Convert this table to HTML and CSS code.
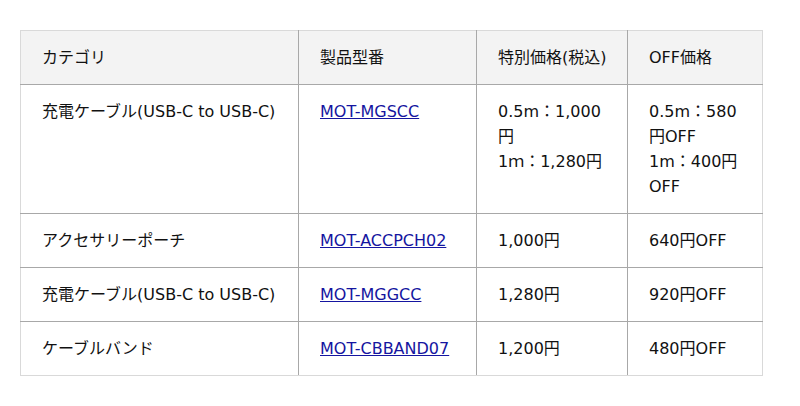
FILE: index.html
```html
<!DOCTYPE html>
<html lang="ja">
<head>
<meta charset="utf-8">
<link rel="stylesheet" href="styles.css">
</head>
<body>
<table class="price-table">
  <colgroup>
    <col class="c1"><col class="c2"><col class="c3"><col class="c4">
  </colgroup>
  <thead>
    <tr><th>カテゴリ</th><th>製品型番</th><th>特別価格(税込)</th><th>OFF価格</th></tr>
  </thead>
  <tbody>
    <tr>
      <td>充電ケーブル(USB-C to USB-C)</td>
      <td><a href="#">MOT-MGSCC</a></td>
      <td>0.5m：1,000円<br>1ｍ：1,280円</td>
      <td>0.5m：580円OFF<br>1m：400円OFF</td>
    </tr>
    <tr>
      <td>アクセサリーポーチ</td>
      <td><a href="#">MOT-ACCPCH02</a></td>
      <td>1,000円</td>
      <td>640円OFF</td>
    </tr>
    <tr>
      <td>充電ケーブル(USB-C to USB-C)</td>
      <td><a href="#">MOT-MGGCC</a></td>
      <td>1,280円</td>
      <td>920円OFF</td>
    </tr>
    <tr>
      <td>ケーブルバンド</td>
      <td><a href="#">MOT-CBBAND07</a></td>
      <td>1,200円</td>
      <td>480円OFF</td>
    </tr>
  </tbody>
</table>
</body>
</html>
```

FILE: styles.css
```css
html, body {
  margin: 0;
  background: #fff;
}
body {
  padding: 30px 20px;
  font-family: "DejaVu Sans", "Noto Sans CJK JP", sans-serif;
  font-size: 16px;
  line-height: 25px;
  color: #111;
}
.price-table {
  border-collapse: collapse;
  table-layout: fixed;
  width: 742px;
  border: 1px solid #d9d9d9;
}
.c1 { width: 278px; }
.c2 { width: 178px; }
.c3 { width: 151px; }
.c4 { width: 135px; }
.price-table th,
.price-table td {
  padding: 14px 19px 14px 21px;
  text-align: left;
  vertical-align: top;
  font-weight: normal;
  border: 1px solid #a8a8a8;
  word-break: break-all;
}
.price-table tr > :last-child { border-right-color: #d9d9d9; }
.price-table tr > :first-child { border-left-color: #d9d9d9; }
.price-table thead th { border-top-color: #d9d9d9; background: #f3f3f3; }
.price-table tbody tr:last-child td { border-bottom-color: #d9d9d9; }
.price-table a {
  color: #1515a0;
  text-decoration: underline;
}
```
